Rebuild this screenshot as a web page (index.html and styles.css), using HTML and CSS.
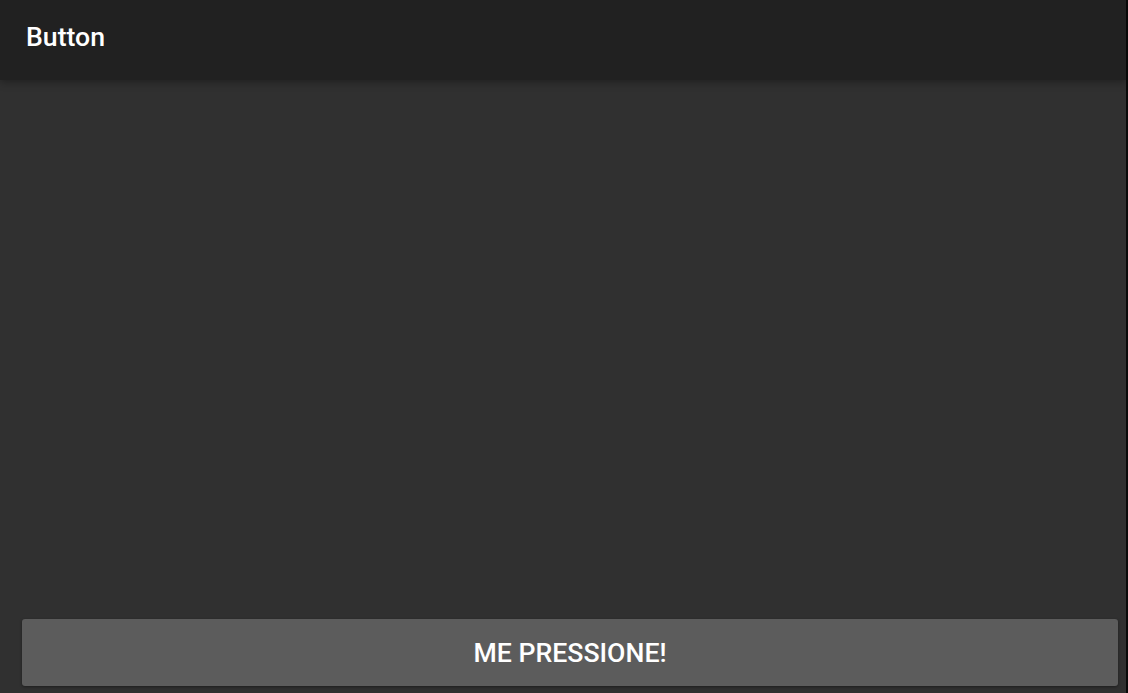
FILE: index.html
```html
<!DOCTYPE html>
<html>
<head>
<meta charset="utf-8">
<link rel="stylesheet" href="styles.css">
</head>
<body>
<div class="screen">
  <header class="toolbar"><span class="title">Button</span></header>
  <main class="content"></main>
  <div class="footer">
    <button class="btn">ME PRESSIONE!</button>
  </div>
</div>
<div class="edge"></div>
</body>
</html>
```
FILE: styles.css
```css
html, body {
  margin: 0;
  padding: 0;
  height: 100%;
  background: #0a0a0a;
  font-family: Roboto, "Noto Sans", sans-serif;
}
body {
  display: flex;
  width: 1128px;
  height: 693px;
}
.screen {
  width: 1126px;
  height: 693px;
  display: flex;
  flex-direction: column;
  background: #303030;
}
.toolbar {
  height: 80px;
  flex: none;
  background: #212121;
  display: flex;
  align-items: center;
  padding-left: 26px;
  box-shadow: 0 2px 8px rgba(0,0,0,0.35);
  position: relative;
  z-index: 1;
}
.title {
  color: #ffffff;
  font-size: 26.67px;
  font-weight: 500;
  margin-top: -6px;
}
.content {
  flex: 1;
}
.footer {
  padding: 0 8px 7px 22px;
  flex: none;
}
.btn {
  width: 100%;
  height: 67px;
  border: none;
  border-radius: 3px;
  background: #5c5c5c;
  color: #ffffff;
  font-family: Roboto, "Noto Sans", sans-serif;
  font-size: 26.67px;
  font-weight: 500;
  padding: 0;
  box-shadow: 0 1px 3px rgba(0,0,0,0.4);
}
.edge {
  width: 2px;
  background: #0a0a0a;
}
```
